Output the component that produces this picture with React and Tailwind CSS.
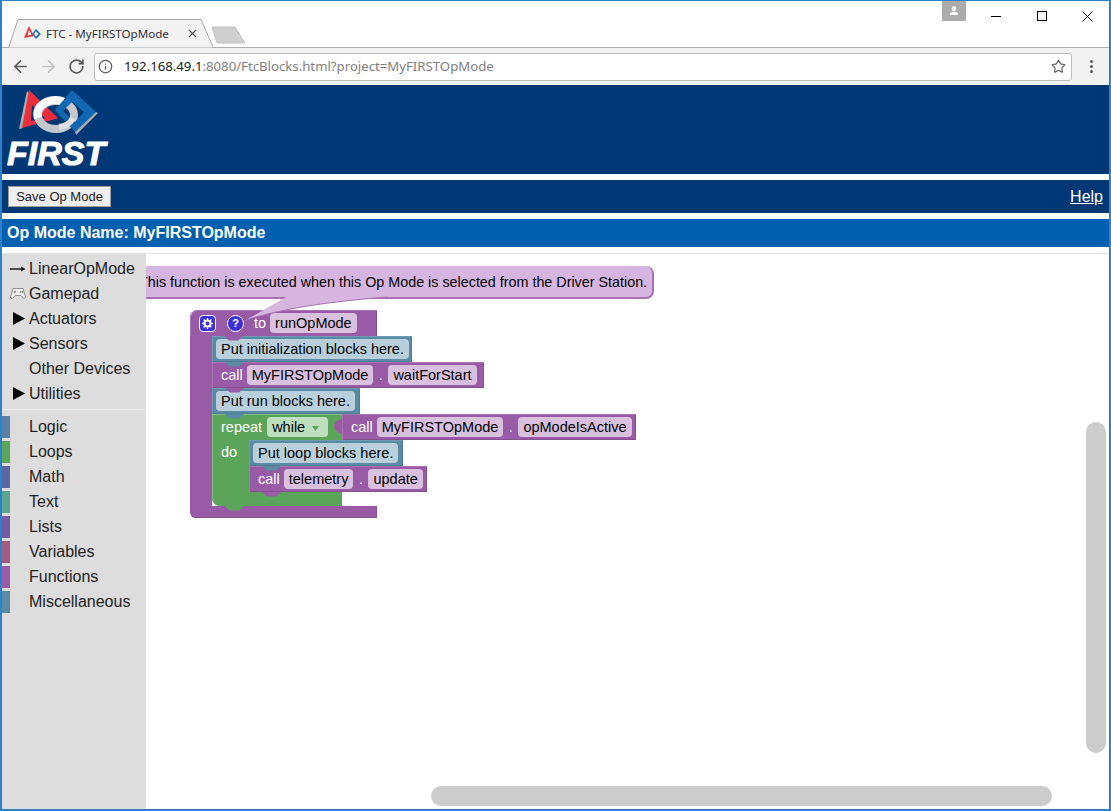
import React from 'react';
import { ArrowLeft, ArrowRight, RotateCw, Info, Star, X } from 'lucide-react';

const PURPLE = '#995ba5';
const TEAL = '#5b8aa5';
const GREEN = '#5ba55b';

const Logo = () => (
  <svg width="104" height="50" viewBox="0 0 104 50" className="ml-[-1px] block">
    <path d="M26 6 L18 44 L22 43 L29 10 Z" fill="#a9adb2" />
    <path fillRule="evenodd" d="M28 5 L57 33 L21 43 Z M31 20 L30 36 L44 33 Z" fill="#ed2d3a" />
    <ellipse cx="55" cy="30" rx="18" ry="14" fill="none" stroke="#c4c7cb" strokeWidth="8" />
    <path d="M37 33 A18 14 0 0 1 68 20" fill="none" stroke="#ffffff" strokeWidth="8" />
    <path d="M42 28 L57 33 L47 36 Z" fill="#ed2d3a" />
    <path fillRule="evenodd" d="M71 5 L95 27 L74 47 L54 25 Z M71 17 L62 26 L74 37 L83 27 Z" fill="#1167b1" />
    <path d="M95 27 L97 28 L75 50 L74 47 Z" fill="#a9adb2" />
    <path d="M58 42 Q68 41 72 33" fill="none" stroke="#dfe1e3" strokeWidth="6" />
  </svg>
);

const Favicon = () => (
  <svg width="17" height="14" viewBox="0 0 17 14" className="block">
    <path fillRule="evenodd" d="M5 0 L10 10 L0 12 Z M5 4 L3.5 9.5 L7.5 8.5 Z" fill="#e0383e" />
    <path fillRule="evenodd" d="M12 3 L17 8 L12 13 L8 8 Z M12 5.5 L10 8 L12 10.5 L14.5 8 Z" fill="#2f6fb5" />
  </svg>
);

const TabStrip = () => (
  <div className="flex h-[47px] shrink-0 border-b border-[#adadad] bg-white">
    <div className="relative z-10 mt-[18px] ml-[6px] flex h-[29px] w-[206px] items-center pl-[16px]">
      <svg width="206" height="29" className="absolute top-0 left-0" viewBox="0 0 206 29">
        <path d="M0.5 29 L10 0.5 L193 0.5 L205.5 29 Z" fill="#f2f2f2" stroke="#a9a9a9" />
      </svg>
      <div className="relative flex items-center">
        <Favicon />
        <span className="ml-[5px] w-[140px] text-[11.6px] text-[#333] font-['Noto_Sans',sans-serif]">FTC - MyFIRSTOpMode</span>
        <X size={13} strokeWidth={2} className="text-[#555]" />
      </div>
    </div>
    <svg width="36" height="20" viewBox="0 0 36 20" className="mt-[25px] ml-[-3px]">
      <path d="M1 1 L24 1 L34 17 L6 17 Z" fill="#cfcfcf" stroke="#c2c2c2" strokeLinejoin="round" />
    </svg>
    <div className="ml-auto flex h-[30px] items-start">
      <div className="flex h-[20px] w-[24px] items-center justify-center bg-[#ababab]">
        <svg width="10" height="10" viewBox="0 0 10 10">
          <circle cx="5" cy="2.7" r="2.4" fill="#fff" />
          <path d="M1 9 L1 7 Q5 4.5 9 7 L9 9 Z" fill="#fff" />
        </svg>
      </div>
      <div className="ml-[7px] flex h-[30px] w-[45px] items-center justify-center">
        <div className="h-px w-[10px] bg-black" />
      </div>
      <div className="flex h-[30px] w-[47px] items-center justify-center">
        <div className="h-[10px] w-[10px] border border-black" />
      </div>
      <div className="flex h-[30px] w-[44px] items-center justify-center">
        <svg width="11" height="11" viewBox="0 0 11 11">
          <path d="M0.5 0.5 L10.5 10.5 M10.5 0.5 L0.5 10.5" stroke="#000" strokeWidth="1" />
        </svg>
      </div>
    </div>
  </div>
);

const Toolbar = () => (
  <div className="flex h-[37px] shrink-0 items-center bg-[#f2f2f2]">
    <ArrowLeft size={19} strokeWidth={2.2} className="ml-[9px] text-[#5a5a5a]" />
    <ArrowRight size={19} strokeWidth={2.2} className="ml-[9px] text-[#c4c4c4]" />
    <RotateCw size={17} strokeWidth={2.4} className="ml-[10px] text-[#5a5a5a]" />
    <div className="ml-[9px] flex h-[28px] w-[978px] items-center rounded-[3px] border border-[#bdbdbd] bg-white">
      <Info size={15} strokeWidth={2} className="ml-[3px] text-[#5a5a5a]" />
      <span className="ml-[11px] text-[13.2px] text-[#222] font-['Noto_Sans',sans-serif]">
        192.168.49.1<span className="text-[#808080]">:8080/FtcBlocks.html?project=MyFIRSTOpMode</span>
      </span>
      <Star size={15} strokeWidth={1.8} className="mr-[5px] ml-auto text-[#5a5a5a]" />
    </div>
    <div className="ml-[18px] flex flex-col gap-[2px]">
      <div className="h-[3px] w-[3px] rounded-full bg-[#5a5a5a]" />
      <div className="h-[3px] w-[3px] rounded-full bg-[#5a5a5a]" />
      <div className="h-[3px] w-[3px] rounded-full bg-[#5a5a5a]" />
    </div>
  </div>
);

const SideArrow = () => (
  <svg width="16" height="8" viewBox="0 0 16 8" className="ml-[8px]">
    <path d="M0 4 L13 4" stroke="#111" strokeWidth="1.4" />
    <path d="M11 1.5 L15.5 4 L11 6.5 Z" fill="#111" />
  </svg>
);

const GamepadIcon = () => (
  <svg width="16" height="13" viewBox="0 0 16 13" className="ml-[8px]">
    <path d="M3 1.5 L13 1.5 L15.5 10 Q15.5 11.5 13.5 11.5 L11 8.5 L5 8.5 L2.5 11.5 Q0.5 11.5 0.5 10 Z" fill="#eeeeee" stroke="#8f8f8f" />
    <path d="M3.5 5 L6 5 M4.75 3.8 L4.75 6.2" stroke="#777" />
    <circle cx="10.5" cy="5" r="0.9" fill="#69a869" />
    <circle cx="12.5" cy="5" r="0.9" fill="#777" />
  </svg>
);

const Triangle = () => (
  <svg width="12" height="13" viewBox="0 0 12 13" className="ml-[11px]">
    <path d="M0 0 L12 6.5 L0 13 Z" fill="#000" />
  </svg>
);

const topItems = [
  { label: 'LinearOpMode', icon: <SideArrow /> },
  { label: 'Gamepad', icon: <GamepadIcon /> },
  { label: 'Actuators', icon: <Triangle /> },
  { label: 'Sensors', icon: <Triangle /> },
  { label: 'Other Devices', icon: null },
  { label: 'Utilities', icon: <Triangle /> },
];

const categories = [
  { label: 'Logic', bar: 'bg-[#5b80a5]' },
  { label: 'Loops', bar: 'bg-[#5ba55b]' },
  { label: 'Math', bar: 'bg-[#5b67a5]' },
  { label: 'Text', bar: 'bg-[#5ba58c]' },
  { label: 'Lists', bar: 'bg-[#745ba5]' },
  { label: 'Variables', bar: 'bg-[#a55b80]' },
  { label: 'Functions', bar: 'bg-[#995ba5]' },
  { label: 'Miscellaneous', bar: 'bg-[#5b8aa5]' },
];

const Sidebar = () => (
  <div className="w-[144px] shrink-0 bg-[#dddddd] pt-[2px] text-[16px] text-[#222]">
    {topItems.map((item) => (
      <div key={item.label} className="relative flex h-[25px] items-center">
        <div className="flex w-[27px] items-center">{item.icon}</div>
        <span className="whitespace-nowrap">{item.label}</span>
      </div>
    ))}
    <div className="mt-[3px] mb-[4px] h-px bg-[#ececec]" />
    {categories.map((item) => (
      <div key={item.label} className="flex h-[25px] items-center">
        <div className={`h-[22px] w-[8px] ${item.bar}`} />
        <span className="ml-[19px]">{item.label}</span>
      </div>
    ))}
  </div>
);

// tab that sticks out of a block's bottom edge into the next one
const Tab = ({ color, left = 13 }) => (
  <svg width="19" height="5" viewBox="0 0 19 5" className="absolute top-[26px] z-20" style={{ left }}>
    <path d="M0 0 L5 4.5 L14 4.5 L19 0 Z" fill={color} />
  </svg>
);

const Field = ({ children, color = 'bg-[#d9c0de]' }) => (
  <span className={`inline-flex h-[20px] items-center rounded-[4px] px-[5px] pt-[2px] whitespace-nowrap text-black ${color}`}>{children}</span>
);

const Label = ({ children, className = '' }) => (
  <span className={`mt-[2px] ${className}`}>{children}</span>
);

const Comment = ({ children, width, left }) => (
  <div className="relative flex h-[26px] items-center bg-[#5b8aa5] pl-[4px] shadow-[inset_1px_1px_0_#6f9ab2,inset_-1px_-1px_0_#4f7d97]" style={{ width }}>
    <Field color="bg-[#b9d0dc]">{children}</Field>
    <Tab color={TEAL} left={left} />
  </div>
);

const CallBlock = ({ obj, method, width, tab, puzzle }) => (
  <div className="relative flex h-[26px] items-center bg-[#995ba5] pl-[9px] text-white shadow-[inset_1px_1px_0_#a873b3,inset_-1px_-1px_0_#854f90]" style={{ width }}>
    {puzzle && (
      <svg width="9" height="15" viewBox="0 0 9 15" className="absolute top-[5px] left-[-9px]">
        <path d="M9 0 L3 2 L1 6 L2 11 L6 14 L9 15 Z" fill={PURPLE} />
      </svg>
    )}
    <Label>call</Label>
    <span className="ml-[4px] flex"><Field>{obj}</Field></span>
    <Label className="mx-[5.5px]">.</Label>
    <Field>{method}</Field>
    {tab}
  </div>
);

const FunctionBlock = () => (
  <div className="flex w-max flex-col text-[14.5px]">
    <div className="relative flex h-[26px] w-[187px] items-center rounded-tl-[8px] bg-[#995ba5] pl-[9px] text-white shadow-[inset_1px_1px_0_#a873b3,inset_-1px_0_0_#854f90]">
      <div className="flex h-[17px] w-[17px] items-center justify-center rounded-[4px] border border-white bg-[#3b2fd9]">
        <svg width="11" height="11" viewBox="0 0 11 11">
          <circle cx="5.5" cy="5.5" r="3" fill="none" stroke="#fff" strokeWidth="2" />
          <path d="M5.5 0 L5.5 11 M0 5.5 L11 5.5 M1.6 1.6 L9.4 9.4 M9.4 1.6 L1.6 9.4" stroke="#fff" strokeWidth="1.4" strokeDasharray="2 7 2" />
        </svg>
      </div>
      <div className="ml-[11px] flex h-[17px] w-[17px] items-center justify-center rounded-full border border-white bg-[#3b2fd9] text-[11px] font-bold">?</div>
      <Label className="ml-[10px]">to</Label>
      <span className="ml-[4px] flex"><Field>runOpMode</Field></span>
      <Tab color={PURPLE} left={34} />
    </div>
    <div className="flex">
      <div className="w-[22px] bg-[#995ba5]" />
      <div className="flex flex-col">
        <Comment width={200} left={13}>Put initialization blocks here.</Comment>
        <CallBlock obj="MyFIRSTOpMode" method="waitForStart" width={272} tab={<Tab color={PURPLE} />} />
        <Comment width={148} left={13}>Put run blocks here.</Comment>
        <div className="flex flex-col">
          <div className="flex">
            <div className="relative flex h-[26px] w-[130px] items-center bg-[#5ba55b] pl-[9px] text-white shadow-[inset_1px_1px_0_#84bc84]">
              <Label>repeat</Label>
              <span className="ml-[5px] inline-flex h-[20px] w-[61px] items-center rounded-[4px] bg-[#bddfbd] pt-[2px] pl-[5px] text-black">
                while
                <svg width="7" height="5" viewBox="0 0 7 5" className="ml-[7px]">
                  <path d="M0 0 L7 0 L3.5 5 Z" fill="#5ba55b" />
                </svg>
              </span>
            </div>
            <CallBlock obj="MyFIRSTOpMode" method="opModeIsActive" width={294} puzzle />
          </div>
          <div className="flex">
            <div className="w-[37px] bg-[#5ba55b] pt-[2px] pl-[9px] text-white shadow-[inset_1px_0_0_#84bc84]">do</div>
            <div className="flex flex-col">
              <Comment width={154} left={13}>Put loop blocks here.</Comment>
              <div className="relative rounded-bl-[8px] bg-[#995ba5]">
                <CallBlock obj="telemetry" method="update" width={178} tab={<Tab color={PURPLE} />} />
              </div>
            </div>
          </div>
          <div className="relative h-[14px] w-[130px] rounded-bl-[8px] bg-[#5ba55b] shadow-[inset_1px_0_0_#84bc84]">
            <svg width="19" height="5" viewBox="0 0 19 5" className="absolute top-[14px] left-[13px] z-20">
              <path d="M0 0 L5 4.5 L14 4.5 L19 0 Z" fill={GREEN} />
            </svg>
          </div>
        </div>
      </div>
    </div>
    <div className="h-[12px] w-[187px] rounded-bl-[6px] border-r border-b border-[#854f90] bg-[#995ba5]" />
  </div>
);

const Workspace = () => (
  <div className="relative min-w-0 flex-1 overflow-hidden bg-white">
    <div className="absolute top-[56px] left-[44px]">
      <FunctionBlock />
    </div>
    <div className="absolute top-[12px] left-[-20px] z-30 flex h-[33px] w-[528px] items-center rounded-[8px] border-r-2 border-b-2 border-[#a771b4] bg-[#d6b6e0] pt-[2px] pl-[13px] text-[14.33px] whitespace-nowrap text-black">
      This function is executed when this Op Mode is selected from the Driver Station.
    </div>
    <svg width="150" height="30" viewBox="0 0 150 30" className="absolute top-[42px] left-[95px] z-30">
      <path d="M47 0 L5 24 Q55 8 146 1 L146 0 Z" fill="#d6b6e0" />
      <path d="M5 24 Q55 8 146 1" fill="none" stroke="#a771b4" strokeWidth="1" />
    </svg>
    <div className="absolute top-[168px] left-[940px] h-[331px] w-[20px] rounded-full bg-[#cccccc]" />
    <div className="absolute top-[532px] left-[285px] h-[20px] w-[621px] rounded-full bg-[#cccccc]" />
  </div>
);

export default function App() {
  return (
    <div className="flex h-[811px] w-[1111px] flex-col overflow-hidden border-t border-r-2 border-b-2 border-l-2 border-[#2b82cc] bg-white font-['Liberation_Sans',Arial,sans-serif]">
      <TabStrip />
      <Toolbar />
      <div className="flex h-[89px] shrink-0 flex-col bg-[#003876]">
        <Logo />
        <div className="relative mt-[3px] ml-[5px] w-max text-[34px] leading-[30px] font-bold text-white italic [-webkit-text-stroke:1px_white]">
          FIRST
        </div>
      </div>
      <div className="mt-[6px] flex h-[33px] shrink-0 items-center justify-between bg-[#003876] pr-[6px] pl-[6px]">
        <button className="h-[21px] w-[103px] border border-[#9f9f9f] bg-[#efefef] text-[13px] text-[#222]">Save Op Mode</button>
        <a className="text-[16px] text-white underline">Help</a>
      </div>
      <div className="mt-[6px] flex h-[28px] shrink-0 items-center bg-[#0060b0] pl-[5px] text-[16px] font-bold text-white">
        Op Mode Name: MyFIRSTOpMode
      </div>
      <div className="h-[7px] shrink-0 border-b border-[#e4e4e4]" />
      <div className="flex min-h-0 flex-1">
        <Sidebar />
        <Workspace />
      </div>
    </div>
  );
}
